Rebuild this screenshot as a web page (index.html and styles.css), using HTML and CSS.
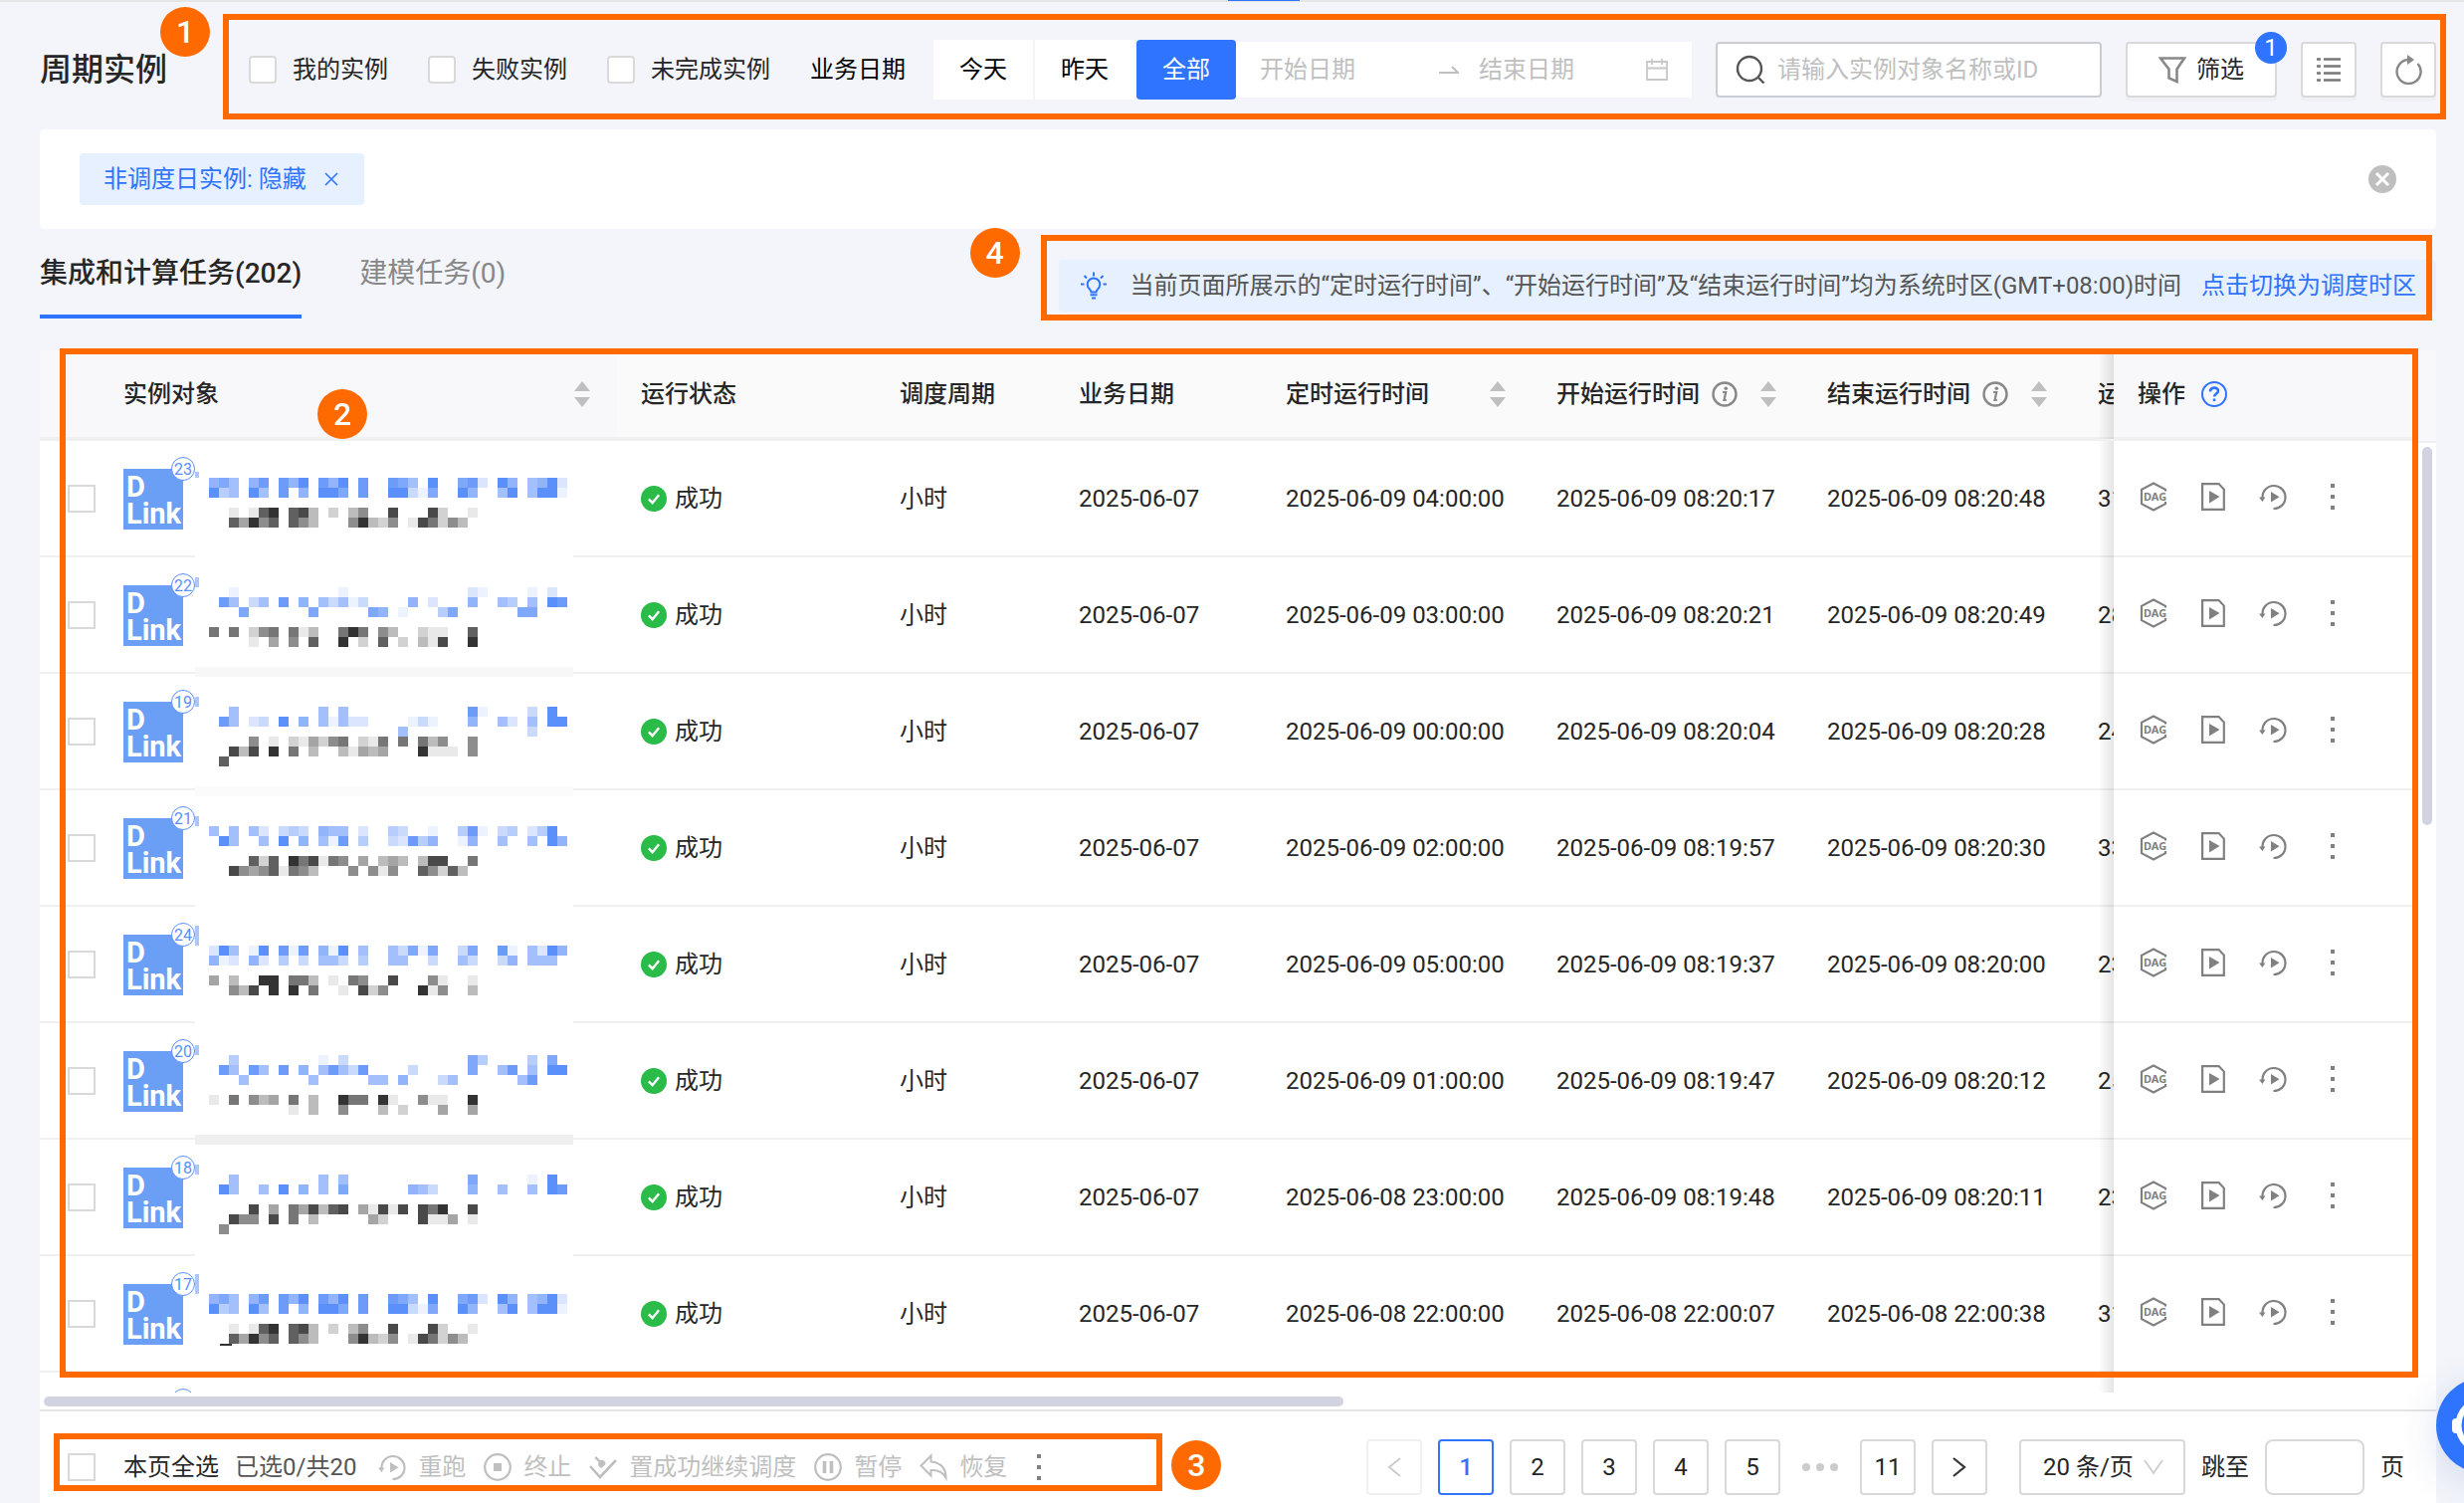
FILE: index.html
```
<!DOCTYPE html>
<html lang="zh-CN">
<head>
  <meta charset="UTF-8">
  <title>周期实例</title>
  <link rel="stylesheet" href="styles.css">
</head>
<body>
  <!-- shared icons -->
  <svg class="sprite" aria-hidden="true">
    <symbol id="i-sort" viewBox="0 0 16 26"><path d="M8 0l8 10H0zM8 26L0 16h16z"/></symbol>
    <symbol id="i-rerun" viewBox="0 0 28 28"><path d="M3.500 15A11.500 11.500 0 1 1 14.500 26" fill="none" stroke="currentColor" stroke-width="2.200"/><path d="M0 14.500h6.400L3.400 19zM12 9l8.500 5.200L12 19.500z" fill="currentColor"/></symbol>
    <symbol id="i-dag" viewBox="0 0 28 30"><path d="M26 9.500V7.800L14 1.500 2 7.800v14.400l12 6.300 12-6.300V20" fill="none" stroke="currentColor" stroke-width="2.200"/><text x="4" y="19" class="dag-text">DAG</text></symbol>
    <symbol id="i-run" viewBox="0 0 24 28"><path d="M1.100 1.100h16.500l5.200 5.500v20.200H1.100z" fill="none" stroke="currentColor" stroke-width="2.200"/><path d="M8 8l10.500 6L8 20.500z" fill="currentColor"/></symbol>
    <symbol id="i-more" viewBox="0 0 4 26"><path d="M0 0h4v4H0zM0 11h4v4H0zM0 22h4v4H0z" fill="currentColor"/></symbol>
    <symbol id="i-info" viewBox="0 0 26 26"><circle cx="13" cy="13" r="11.500" fill="none" stroke="currentColor" stroke-width="2.400"/><path d="M11 11h3.200l-1.700 8h2.300" fill="none" stroke="currentColor" stroke-width="2.200"/><circle cx="14.300" cy="7.200" r="1.800" fill="currentColor"/></symbol>
    <symbol id="i-ok" viewBox="0 0 28 28"><circle cx="14" cy="14" r="14" fill="#2abb48"/><path d="M8.500 14.500l4 4 7-8.500" fill="none" stroke="#fff" stroke-width="2.600"/></symbol>
  </svg>

  <div class="top-line"><i></i></div>

  <header class="header">
    <h1>周期实例</h1>
    <div class="toolbar">
      <label class="check"><input type="checkbox">我的实例</label>
      <label class="check"><input type="checkbox">失败实例</label>
      <label class="check"><input type="checkbox">未完成实例</label>
      <div class="biz-date">
        <span class="biz-label">业务日期</span>
        <div class="seg">
          <button>今天</button>
          <button>昨天</button>
          <button class="active">全部</button>
        </div>
        <div class="range">
          <input type="text" placeholder="开始日期" aria-label="开始日期">
          <svg class="range-arrow" width="20" height="10" viewBox="0 0 20 10"><path d="M0 8h19l-6-6" fill="none" stroke="#bfbfbf" stroke-width="2"/></svg>
          <input type="text" placeholder="结束日期" aria-label="结束日期">
          <svg width="22" height="22" viewBox="0 0 22 22"><path d="M1 3h20v18H1zM1 9.500h20M6 0v6M16 0v6" fill="none" stroke="#c8c8c8" stroke-width="1.800"/></svg>
        </div>
      </div>
      <div class="search">
        <svg width="30" height="30" viewBox="0 0 30 30"><circle cx="14" cy="14" r="12" fill="none" stroke="#555" stroke-width="2.400"/><path d="M22.500 22.500l6 6" stroke="#555" stroke-width="2.400"/></svg>
        <input type="text" placeholder="请输入实例对象名称或ID" aria-label="搜索">
      </div>
      <button class="btn filter-btn">
        <svg width="28" height="28" viewBox="0 0 28 28"><path d="M2 2.500h24l-7.500 11V26l-8-3.500v-9z" fill="none" stroke="#888" stroke-width="2.600"/></svg>
        筛选
        <span class="count">1</span>
      </button>
      <button class="btn square" aria-label="列表">
        <svg width="26" height="26" viewBox="0 0 26 26"><path d="M8 2.500h17M8 9.500h17M8 16.500h17M8 23.500h17M1 2.500h4M1 9.500h4M1 16.500h4M1 23.500h4" stroke="#777" stroke-width="2.400"/></svg>
      </button>
      <button class="btn square" aria-label="刷新">
        <svg width="28" height="30" viewBox="0 0 28 30"><path d="M23.500 9A12 12 0 1 1 14 5" fill="none" stroke="#888" stroke-width="2.400"/><path d="M13 0l7 5-7 5z" fill="#888"/></svg>
      </button>
      <div class="mark mark-1"><b>1</b></div>
    </div>
  </header>

  <section class="filters">
    <span class="tag">非调度日实例: 隐藏
      <button aria-label="移除"><svg width="14" height="14" viewBox="0 0 14 14"><path d="M1 1l12 12M13 1L1 13" stroke="#2e74ff" stroke-width="1.600"/></svg></button>
    </span>
    <button aria-label="清空">
      <svg width="28" height="28" viewBox="0 0 28 28"><circle cx="14" cy="14" r="14" fill="#bfbfbf"/><path d="M8 8l12 12M20 8L8 20" stroke="#fff" stroke-width="3"/></svg>
    </button>
  </section>

  <nav class="tabs">
    <a href="#" class="tab active">集成和计算任务(202)</a>
    <a href="#" class="tab">建模任务(0)</a>
    <div class="notice">
      <svg width="26" height="28" viewBox="0 0 26 28"><path d="M10.500 20.500c0-2.500-3.800-3.500-3.800-7.800a6.300 6.300 0 0 1 12.600 0c0 4.300-3.800 5.300-3.800 7.800zM13 .5v4M3.500 4l2.500 2.500M22.500 4L20 6.500M0 12.500h3.500M22.500 12.500H26M9.500 23.300h7M11 26.500h4" fill="none" stroke="#2e74ff" stroke-width="2"/></svg>
      <span>当前页面所展示的“定时运行时间”、“开始运行时间”及“结束运行时间”均为系统时区(GMT+08:00)时间</span>
      <a href="#">点击切换为调度时区</a>
      <div class="mark mark-4"><b>4</b></div>
    </div>
  </nav>

  <main class="panel">
    <div class="grid">
      <div class="grid-scroll">
        <table>
          <colgroup>
            <col class="c-check"><col class="c-obj"><col class="c-status"><col class="c-cycle"><col class="c-date">
            <col class="c-time"><col class="c-time"><col class="c-time"><col><col class="c-ops">
          </colgroup>
          <thead>
            <tr>
              <th class="fixed"></th>
              <th class="fixed"><div class="th">实例对象<svg class="sort"><use href="#i-sort"/></svg></div></th>
              <th>运行状态</th>
              <th>调度周期</th>
              <th>业务日期</th>
              <th><div class="th">定时运行时间<svg class="sort"><use href="#i-sort"/></svg></div></th>
              <th><div class="th">开始运行时间<svg class="info"><use href="#i-info"/></svg><svg class="sort"><use href="#i-sort"/></svg></div></th>
              <th><div class="th">结束运行时间<svg class="info"><use href="#i-info"/></svg><svg class="sort"><use href="#i-sort"/></svg></div></th>
              <th>运行时长</th>
              <th class="ops"><div class="th">操作
                <svg class="help" viewBox="0 0 26 26"><circle cx="13" cy="13" r="12" fill="none" stroke="#2e74ff" stroke-width="2"/><path d="M9 10.500c0-5 8-5 8-.8 0 2.800-3.900 2.700-3.900 5.800M13.100 17.500v2.500" fill="none" stroke="#2e74ff" stroke-width="2.600"/></svg>
              </div></th>
            </tr>
          </thead>
          <tbody id="rows"></tbody>
        </table>
      </div>
      <div class="gutter"><i></i></div>
      <div class="mark mark-2"><b>2</b></div>
    </div>
    <div class="hscroll"><i></i></div>

    <footer class="footer">
      <div class="batch">
        <label class="check-all"><input type="checkbox" class="box">本页全选</label>
        <span class="picked">已选0/共20</span>
        <div class="batch-actions">
          <button disabled><svg width="28" height="28"><use href="#i-rerun"/></svg>重跑</button>
          <button disabled><svg width="28" height="28" viewBox="0 0 28 28"><circle cx="14" cy="14" r="12.800" fill="none" stroke="currentColor" stroke-width="2.200"/><path d="M10 10h8v8h-8z" fill="currentColor"/></svg>终止</button>
          <button disabled><svg width="28" height="28" viewBox="0 0 28 28"><path d="M1 13l10 11L27 7" fill="none" stroke="currentColor" stroke-width="2.600"/><path d="M7 3l4 4a4 4 0 0 1 5.500 4L12.500 15C9.500 14 8.500 12 9.500 9L5.500 5z" fill="currentColor"/></svg>置成功继续调度</button>
          <button disabled><svg width="28" height="28" viewBox="0 0 28 28"><circle cx="14" cy="14" r="12.800" fill="none" stroke="currentColor" stroke-width="2.200"/><path d="M10.500 8v12M17.500 8v12" stroke="currentColor" stroke-width="3.600"/></svg>暂停</button>
          <button disabled><svg width="28" height="28" viewBox="0 0 28 28"><path d="M11.500 2.500L1.500 12.500l10 10V17c7-.5 11.500 1.500 15 7.500 0-9-5-15-15-16z" fill="none" stroke="currentColor" stroke-width="2"/></svg>恢复</button>
        </div>
        <button class="more" aria-label="更多"><svg width="4" height="26"><use href="#i-more"/></svg></button>
        <div class="mark mark-3"><b>3</b></div>
      </div>

      <div class="pager">
        <button class="off" disabled aria-label="上一页"><svg width="14" height="20" viewBox="0 0 14 20"><path d="M13 1L2 10l11 9" fill="none" stroke="#ccc" stroke-width="2"/></svg></button>
        <button class="active">1</button>
        <button>2</button>
        <button>3</button>
        <button>4</button>
        <button>5</button>
        <span class="dots"><i></i><i></i><i></i></span>
        <button>11</button>
        <button aria-label="下一页"><svg width="14" height="20" viewBox="0 0 14 20"><path d="M1 1l11 9-11 9" fill="none" stroke="#333" stroke-width="2.200"/></svg></button>
        <div class="size">
          <select aria-label="每页条数"><option>20 条/页</option></select>
          <svg width="20" height="16" viewBox="0 0 20 16"><path d="M1 1l9 13 9-13" fill="none" stroke="#ccc" stroke-width="1.800"/></svg>
        </div>
        <label class="jump">跳至<input type="text">页</label>
      </div>
    </footer>
  </main>

  <button class="assistant" aria-label="助手">
    <svg width="96" height="96" viewBox="0 0 96 96"><circle cx="48" cy="48" r="25.500" fill="none" stroke="#fff" stroke-width="6"/><rect x="16" y="41" width="8" height="15" rx="4" fill="#fff"/><rect x="72" y="41" width="8" height="15" rx="4" fill="#fff"/></svg>
  </button>

  <script>
    // Masked names: one digit per 10px cell, 9 is the darkest
    const maskA = {
      name: ['675.68.869.869.8..875.9..782.96.5692', '945.95.8.6.997.8..99317..96..59.5991'],
      owner: ['..1.179.783.2.35..8...82..1', '..74957.753...59325.186253']
    };

    // mask.top: first line from the row's top edge, mask.gap: lines between name and owner
    const rows = [
      { no: 23, sched: '2025-06-09 04:00:00', start: '2025-06-09 08:20:17', end: '2025-06-09 08:20:48', cost: '31秒',
        mask: { top: 37, gap: 1, edge: 6, ...maskA } },
      { no: 22, sched: '2025-06-09 03:00:00', start: '2025-06-09 08:20:21', end: '2025-06-09 08:20:49', cost: '28秒',
        mask: { top: 30, gap: 1, edge: 10, band: '#f7f7f7', bandTop: 110,
          name: ['..1..........1............21....1.2', '.85.35.8.6.53513....6.2...6..54.5.98', '...7......7.....76.1...47......77'],
          owner: ['6.6.256.613..696.53..211..7', '....1.4.5.7..9.2.7.2.318..9'] } },
      { no: 19, sched: '2025-06-09 00:00:00', start: '2025-06-09 08:20:04', end: '2025-06-09 08:20:28', cost: '24秒',
        mask: { top: 33, gap: 0, edge: 10, band: '#fbfbfb', bandTop: 113,
          name: ['..5........5.5............81....3.9', '.85.23.9.6.51522....131...6..52.5.99', '...................5............3'],
          owner: ['....5.1.214256.216.6.635..5', '..838.9.6.3..31434...9111.5', '.7'] } },
      { no: 21, sched: '2025-06-09 02:00:00', start: '2025-06-09 08:19:57', end: '2025-06-09 08:20:30', cost: '33秒',
        mask: { top: 36, gap: 1, edge: 10,
          name: ['5.5.52.343.655.2..43..1..481.34.249', '.95..5.9.6.518.4..32846..16..5..5.96'],
          owner: ['....727.968165.4.343.388..6', '..854571653...5.515..75273'] } },
      { no: 24, sched: '2025-06-09 05:00:00', start: '2025-06-09 08:19:37', end: '2025-06-09 08:20:00', cost: '23秒',
        mask: { top: 39, gap: 1, edge: 20,
          name: ['295.19.818.619.5..53717..37..81.5296', '612.62.4.3.553.4..55..3..53..36.555'],
          owner: ['4.3..99.663.1.65..8...51..1', '..538.9.9.6..1.825...915..3'] } },
      { no: 20, sched: '2025-06-09 01:00:00', start: '2025-06-09 08:19:47', end: '2025-06-09 08:20:12', cost: '25秒',
        mask: { top: 32, gap: 1, edge: 10, band: '#efefef', bandTop: 112,
          name: ['..4........1.3............74....4.7', '.85.85.8.6.58538....3.....7..58.5.99', '...5......5.....55.6...35......58'],
          owner: ['1.6.534.6.3..966.91..511..9', '........1.3..5...3.2...4..4'] } },
      { no: 18, sched: '2025-06-08 23:00:00', start: '2025-06-09 08:19:48', end: '2025-06-09 08:20:11', cost: '23秒',
        mask: { top: 35, gap: 1, edge: 10,
          name: ['..5........5.5............7.....1.9', '.95..5.9.6.5.7......653...6..5..5.98'],
          owner: ['....8.4.648378.41818.869..8', '..855.8.6.3.....42...8114.1', '.5'] } },
      { no: 17, sched: '2025-06-08 22:00:00', start: '2025-06-08 22:00:07', end: '2025-06-08 22:00:38', cost: '31秒',
        mask: { top: 38, gap: 1, edge: 20, last: true, ...maskA } }
    ];

    function cells(lines, top, color) {
      let out = '';
      lines.forEach((line, y) => {
        [...line].forEach((c, x) => {
          if (c === '.') return;
          out += `<rect x="${14 + x * 10}" y="${top + y * 10}" width="10" height="10" fill="${color}" opacity="${(c / 9).toFixed(2)}"/>`;
        });
      });
      return out;
    }

    function drawMask(m) {
      const ownerTop = m.top + (m.name.length + m.gap) * 10;
      let out = `<rect x="0" y="${m.top - m.edge}" width="4" height="${m.edge}" fill="#adc6fb"/>`;
      if (!m.last) out += '<rect x="0" y="110" width="380" height="7" fill="#fff"/>';
      if (m.band) out += `<rect x="0" y="${m.bandTop}" width="380" height="10" fill="${m.band}"/>`;
      if (m.last) out += '<rect x="25" y="88" width="12" height="2" fill="#333"/>';
      out += cells(m.name, m.top, '#5b8ff9') + cells(m.owner, ownerTop, '#333');
      return `<svg class="mask" width="380" height="117" aria-hidden="true">${out}</svg>`;
    }

    const ops = `
      <div class="op-list">
        <button aria-label="DAG"><svg width="28" height="30"><use href="#i-dag"/></svg></button>
        <button aria-label="运行日志"><svg width="24" height="28"><use href="#i-run"/></svg></button>
        <button aria-label="重跑"><svg width="28" height="28"><use href="#i-rerun"/></svg></button>
        <button aria-label="更多"><svg width="4" height="26"><use href="#i-more"/></svg></button>
      </div>`;

    const body = document.getElementById('rows');
    rows.forEach(r => {
      const tr = document.createElement('tr');
      tr.innerHTML = `
        <td class="pick"><input type="checkbox" class="box" aria-label="选择"></td>
        <td class="obj"><div class="logo">D<br>Link<span>${r.no}</span></div>${drawMask(r.mask)}</td>
        <td><div class="status"><svg width="26" height="26"><use href="#i-ok"/></svg>成功</div></td>
        <td>小时</td>
        <td>2025-06-07</td>
        <td>${r.sched}</td>
        <td>${r.start}</td>
        <td>${r.end}</td>
        <td>${r.cost}</td>
        <td class="ops">${ops}</td>
      `;
      body.appendChild(tr);
    });

    // next row, only its top edge shows above the scrollbar
    const next = document.createElement('tr');
    next.innerHTML = '<td></td><td class="obj"><div class="logo"><span></span></div></td><td colspan="7"></td><td class="ops"></td>';
    body.appendChild(next);
  </script>
</body>
</html>
```

FILE: styles.css
```
* {
  box-sizing: border-box;
}

body {
  margin: 0;
  height: 100vh;
  overflow: hidden;
  display: flex;
  flex-direction: column;
  position: relative;
  background-color: #f3f5fa;
  color: #262626;
  font-family: Roboto, "Noto Sans CJK SC", sans-serif;
  font-size: 24px;
  line-height: 36px;
}

button,
input,
select {
  font: inherit;
  color: inherit;
}

button {
  padding: 0;
  border: none;
  background: none;
  cursor: pointer;
}

a {
  color: #2e74ff;
  text-decoration: none;
}

svg {
  display: block;
  flex: none;
}

.sprite {
  display: none;
}

input::placeholder {
  color: #bfbfbf;
  opacity: 1;
}

input[type="checkbox"] {
  appearance: none;
  flex: none;
  width: 28px;
  height: 28px;
  margin: 0;
  border: 2px solid #d9d9d9;
  border-radius: 4px;
  background-color: #fff;
}

input.box {
  display: block;
  border-radius: 0;
}

.top-line {
  flex: none;
  height: 2px;
  background-color: #e4e6e6;
}

.top-line i {
  display: block;
  width: 72px;
  height: 1px;
  margin-left: 1234px;
  background-color: #2e74ff;
}

/* header */
.header {
  flex: none;
  display: flex;
  align-items: center;
  gap: 82px;
  padding: 38px 28px 30px 40px;
}

h1 {
  flex: none;
  margin: 0;
  font-size: 32px;
  line-height: 48px;
  font-weight: 500;
}

.toolbar {
  flex: 1;
  position: relative;
  display: flex;
  align-items: center;
  gap: 24px;
  height: 60px;
}

.check {
  display: flex;
  align-items: center;
  gap: 16px;
  margin-right: 16px;
  white-space: nowrap;
}

.biz-date {
  flex: 1;
  display: flex;
  align-items: center;
  color: #000;
}

.biz-label {
  margin-right: 28px;
  white-space: nowrap;
}

.seg {
  display: flex;
  gap: 2px;
}

.seg button {
  width: 100px;
  height: 60px;
  background-color: #fff;
}

.seg .active {
  border-radius: 4px;
  background-color: #2e74ff;
  color: #fff;
}

.range {
  flex: 1;
  display: flex;
  align-items: center;
  height: 56px;
  padding: 0 24px;
  background-color: #fff;
}

.range input {
  flex: 1;
  width: 0;
  border: none;
  padding: 0;
  background: none;
}

.range-arrow {
  margin: 0 20px 0 12px;
}

.search {
  display: flex;
  align-items: center;
  gap: 12px;
  width: 388px;
  height: 56px;
  padding: 0 18px;
  border: 2px solid #c9ccd3;
  border-radius: 4px;
  background-color: #fff;
}

.search input {
  flex: 1;
  width: 0;
  padding: 0;
  border: none;
}

.btn {
  position: relative;
  display: flex;
  align-items: center;
  justify-content: center;
  gap: 10px;
  height: 56px;
  border: 2px solid #d9d9d9;
  border-radius: 4px;
  background-color: #fff;
  box-shadow: 0 4px 0 rgba(0, 0, 0, 0.02);
}

.filter-btn {
  width: 152px;
}

.square {
  width: 56px;
}

.count {
  position: absolute;
  top: -12px;
  right: -12px;
  width: 32px;
  height: 32px;
  border-radius: 16px;
  background-color: #2e74ff;
  color: #fff;
  line-height: 32px;
  text-align: center;
}

/* numbered callouts */
.mark {
  position: absolute;
  z-index: 5;
  border: 6px solid #ff6a00;
  pointer-events: none;
}

.mark b {
  position: absolute;
  width: 50px;
  height: 50px;
  border-radius: 25px;
  background-color: #ff6a00;
  color: #fff;
  font-size: 32px;
  line-height: 50px;
  font-weight: 500;
  text-align: center;
}

.mark-1 {
  inset: -26px -10px -20px -26px;
}

.mark-1 b {
  left: -69px;
  top: -13px;
}

.mark-2 {
  inset: -2px 18px 15px 20px;
}

.mark-2 b {
  left: 253px;
  top: 35px;
}

.mark-3 {
  inset: -6px -122px 4px -14px;
}

.mark-3 b {
  right: -65px;
  top: 1px;
}

.mark-4 {
  inset: -25px 4px -9px -18px;
}

.mark-4 b {
  left: -77px;
  top: -13px;
}

/* active filters */
.filters {
  flex: none;
  display: flex;
  align-items: center;
  justify-content: space-between;
  height: 100px;
  margin: 0 28px 0 40px;
  padding: 0 40px;
  border-radius: 4px;
  background-color: #fff;
}

.tag {
  display: flex;
  align-items: center;
  gap: 18px;
  height: 52px;
  padding: 0 26px 0 24px;
  border-radius: 4px;
  background-color: #e6f0ff;
  color: #2e74ff;
}

/* tabs */
.tabs {
  flex: none;
  display: flex;
  align-items: flex-end;
  gap: 58px;
  height: 122px;
  padding: 0 28px 32px 40px;
}

.tab {
  padding-bottom: 20px;
  border-bottom: 4px solid transparent;
  color: #888;
  font-size: 28px;
  line-height: 42px;
  white-space: nowrap;
}

.tab.active {
  border-color: #2e74ff;
  color: #262626;
  font-weight: 500;
}

.notice {
  position: relative;
  display: flex;
  align-items: center;
  height: 52px;
  margin: 0 0 7px auto;
  padding: 0 20px 0 22px;
  border-radius: 4px;
  background-color: #e6f0ff;
  color: #555;
  white-space: nowrap;
}

.notice span {
  margin: 0 20px 0 24px;
}

/* table */
.panel {
  flex: 1;
  min-height: 0;
  display: flex;
  flex-direction: column;
  margin: 0 28px 0 40px;
  border-radius: 8px 8px 0 0;
  background-color: #fff;
}

.grid {
  flex: 1;
  min-height: 0;
  position: relative;
  display: flex;
}

.grid-scroll {
  flex: 1;
  min-width: 0;
  overflow: hidden;
}

.gutter {
  width: 24px;
  padding-left: 10px;
}

.gutter::before {
  content: "";
  display: block;
  height: 91px;
  margin: 0 0 4px -10px;
  border-bottom: 2px solid #f0f0f0;
  background-color: #f8f8fb;
}

.gutter i {
  display: block;
  width: 10px;
  height: 380px;
  border-radius: 5px;
  background-color: #d1d4e0;
}

table {
  width: 4200px;
  table-layout: fixed;
  border-collapse: separate;
  border-spacing: 0;
}

.c-check {
  width: 60px;
}

.c-obj {
  width: 520px;
}

.c-status {
  width: 260px;
}

.c-cycle {
  width: 180px;
}

.c-date {
  width: 208px;
}

.c-time {
  width: 272px;
}

.c-ops {
  width: 300px;
}

th {
  height: 91px;
  padding: 0 24px;
  border-bottom: 4px solid #f0f0f0;
  background-color: #fafafa;
  font-weight: 500;
  text-align: left;
}

.th {
  display: flex;
  align-items: center;
}

.sort {
  width: 16px;
  height: 26px;
  margin: 0 3px 0 auto;
  fill: #bfbfbf;
}

.info,
.help {
  width: 26px;
  height: 26px;
  margin-left: 12px;
  color: #888;
}

.help {
  margin-left: 16px;
}

td {
  height: 117px;
  padding: 0 24px;
  border-bottom: 2px solid #f0f0f0;
}

.pick {
  padding: 0 0 0 28px;
}

.obj {
  position: relative;
}

th.fixed,
th.ops {
  background-color: #f8f8fb;
}

.ops {
  position: sticky;
  right: 0;
  z-index: 2;
  background-color: #fff;
}

.ops::before {
  content: "";
  position: absolute;
  top: 0;
  bottom: -2px;
  left: -16px;
  width: 16px;
  background: linear-gradient(to left, rgba(0, 0, 0, 0.1), rgba(0, 0, 0, 0));
}

.logo {
  position: relative;
  width: 60px;
  height: 61px;
  margin-top: 2px;
  padding: 5px 3px;
  background-color: #6b9ff5;
  color: #fff;
  font-size: 29px;
  line-height: 27px;
  font-weight: 700;
}

.logo span {
  position: absolute;
  z-index: 1;
  top: -12px;
  right: -12px;
  width: 24px;
  height: 24px;
  border: 1px solid #5b8ff9;
  border-radius: 12px;
  background-color: #fff;
  color: #5b8ff9;
  font-size: 16px;
  line-height: 24px;
  font-weight: 400;
  text-align: center;
}

.mask {
  position: absolute;
  left: 96px;
  top: 0;
  overflow: visible;
}

.status {
  display: flex;
  align-items: center;
  gap: 8px;
}

.op-list {
  display: flex;
  align-items: center;
  gap: 34px;
  padding: 0 0 4px 2px;
  color: #808080;
}

.op-list button:last-child {
  margin-left: 10px;
}

.dag-text {
  fill: currentColor;
  font-family: "Noto Sans", sans-serif;
  font-size: 11px;
  font-weight: 700;
}

.hscroll {
  flex: none;
  height: 17px;
  padding: 4px;
}

.hscroll i {
  display: block;
  width: 54.4%;
  height: 10px;
  border-radius: 5px;
  background-color: #d1d4e0;
}

/* footer */
.footer {
  flex: none;
  display: flex;
  align-items: center;
  justify-content: space-between;
  padding: 28px 32px 8px 28px;
  border-top: 2px solid #e5e5e5;
}

.batch {
  position: relative;
  display: flex;
  align-items: center;
  height: 56px;
}

.check-all {
  display: flex;
  align-items: center;
  gap: 28px;
}

.picked {
  margin: 0 22px 0 16px;
  color: #555;
}

.batch-actions {
  display: flex;
  gap: 18px;
  color: #bfbfbf;
}

.batch-actions button {
  display: flex;
  align-items: center;
  gap: 12px;
}

.more {
  margin-left: 30px;
  color: #808080;
}

.pager {
  display: flex;
  align-items: center;
  gap: 16px;
}

.pager button {
  display: flex;
  align-items: center;
  justify-content: center;
  width: 56px;
  height: 56px;
  border: 2px solid #d9d9d9;
  border-radius: 4px;
}

.pager .off {
  border-color: #f0f0f0;
}

.pager .active {
  border-color: #2e74ff;
  color: #2e74ff;
  font-weight: 500;
}

.dots {
  display: flex;
  justify-content: center;
  gap: 6px;
  width: 48px;
}

.dots i {
  width: 8px;
  height: 8px;
  border-radius: 4px;
  background-color: #ccc;
}

.size {
  position: relative;
  margin-left: 16px;
}

.size select {
  display: block;
  appearance: none;
  width: 167px;
  height: 56px;
  padding: 0 22px;
  border: 2px solid #d9d9d9;
  border-radius: 4px;
  background-color: #fff;
}

.size svg {
  position: absolute;
  right: 22px;
  top: 20px;
  pointer-events: none;
}

.jump {
  display: flex;
  align-items: center;
  gap: 16px;
}

.jump input {
  width: 100px;
  height: 56px;
  border: 2px solid #d9d9d9;
  border-radius: 8px;
}

.assistant {
  position: absolute;
  right: -68px;
  bottom: 30px;
  width: 96px;
  height: 96px;
  border-radius: 48px;
  background-color: #2e74ff;
  box-shadow: 0 8px 40px rgba(40, 70, 160, 0.16);
}
```
